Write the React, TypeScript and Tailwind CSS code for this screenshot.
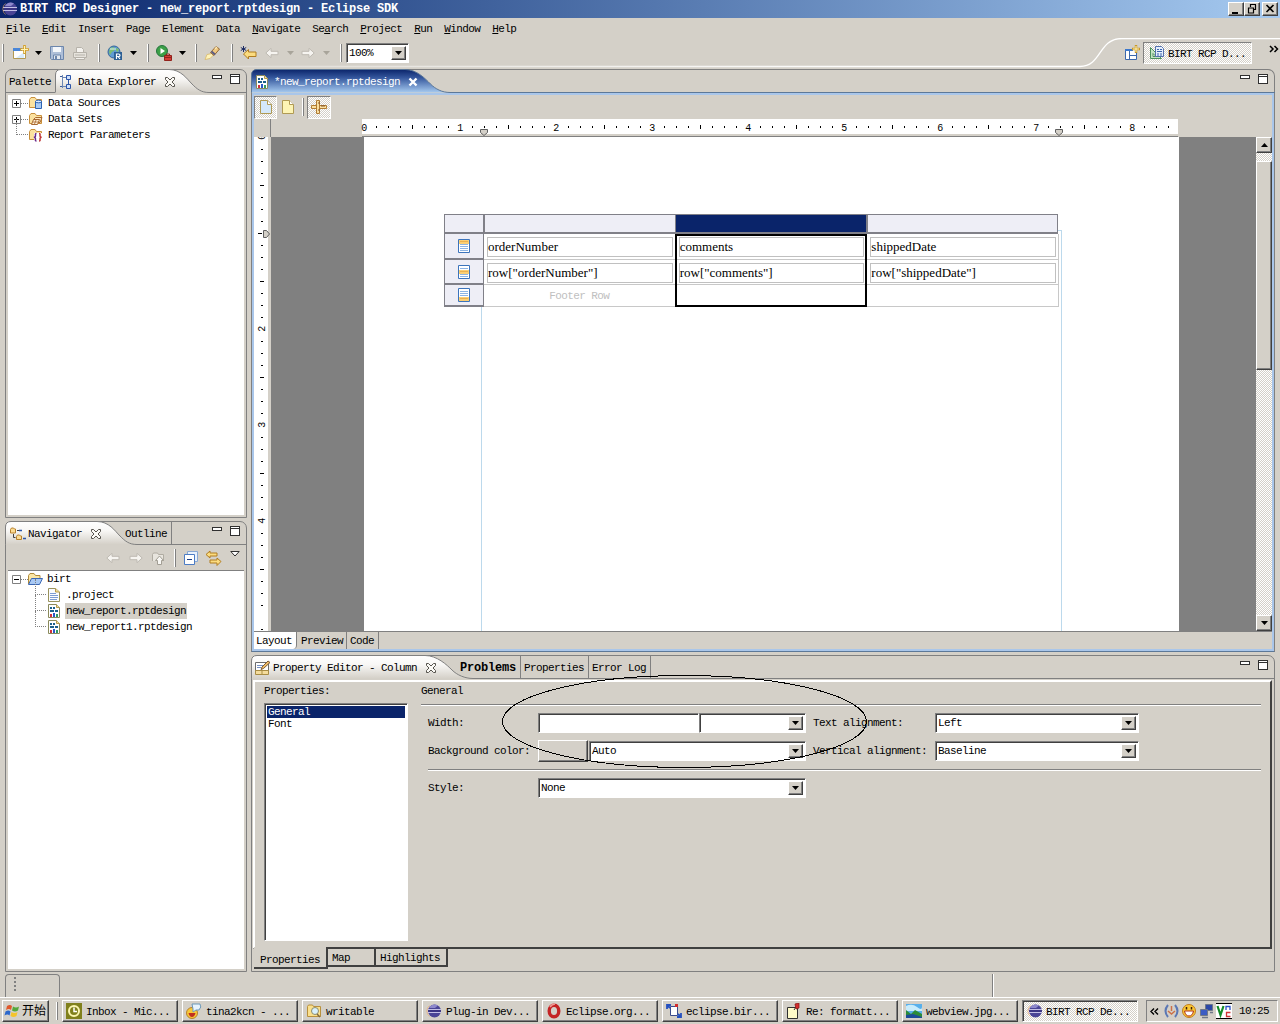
import type { ReactNode } from 'react';

const RAISED =
  'border border-t-white border-l-white border-r-[#404040] border-b-[#404040] bg-[#d4d0c8] shadow-[inset_-1px_-1px_0_#808080]';
const SUNKEN =
  'border border-t-[#808080] border-l-[#808080] border-r-white border-b-white shadow-[inset_1px_1px_0_#404040]';
const CHECKER = 'bg-[repeating-conic-gradient(#ffffff_0_25%,#d4d0c8_0_50%)] bg-[length:2px_2px]';

function Svg({ w = 16, h = 16, className = '', children }: { w?: number; h?: number; className?: string; children: ReactNode }) {
  return (
    <svg width={w} height={h} viewBox={`0 0 ${w} ${h}`} className={`block shrink-0 ${className}`}>
      {children}
    </svg>
  );
}

/* ---------- icons ---------- */

function EclipseIcon() {
  return (
    <Svg>
      <circle cx="8.5" cy="8" r="6.5" fill="#4a4596" />
      <path d="M4 3.500A6.500 6.500 0 0 1 12 2.600L9 5H3z" fill="#8d88cc" />
      <path d="M1 6.500h14M1 9.500h14" stroke="#c4c0e6" />
      <path d="M2 8h13" stroke="#2c2672" />
      <path d="M3.500 2.500A7 7 0 0 0 3.500 13.500" fill="none" stroke="#f0a860" strokeWidth=".6" />
    </Svg>
  );
}

function ReportIcon() {
  return (
    <Svg>
      <path d="M2.500 1.500h8l3 3v10h-11z" fill="#fff" stroke="#8a8a5c" />
      <path d="M10.500 1.500v3h3" fill="#f3e2a0" stroke="#b79a4c" />
      <path d="M4 4h2v2H4zM7 4h2v2H7zM4 7h4v2H4zM9 7h3v2H9z" fill="#1c5f8c" />
      <path d="M4 11h2v3H4z" fill="#d22f3a" />
      <path d="M7 10h2v4H7z" fill="#2b57c8" />
      <path d="M10 11h2v3h-2z" fill="#2f9a66" />
    </Svg>
  );
}

function FileIcon() {
  return (
    <Svg>
      <path d="M2.500 1.500h7l4 3.500v9.500h-11z" fill="#fbfcff" stroke="#9a935c" />
      <path d="M9.500 1.500v3.500h4" fill="#f0dc98" stroke="#b79a4c" />
      <path d="M4 6.500h6M4 8.500h8M4 10.500h8M4 12.500h7" stroke="#7d9cd2" />
    </Svg>
  );
}

function FolderOpenIcon() {
  return (
    <Svg>
      <path d="M1.500 13V4.500l1.500-2h4l1.500 2h4.500V8" fill="#fbe6a4" stroke="#b08a3c" />
      <path d="M1.500 13.500L4.500 7.500h11l-3 6z" fill="#a9c9f4" stroke="#3c68b4" />
    </Svg>
  );
}

function DataFolderIcon({ kind }: { kind: 'source' | 'set' | 'param' }) {
  return (
    <Svg>
      <path d="M1.500 12.500v-8l1.500-2h4l1.500 2h5v8z" fill="#fbe2a0" stroke="#c88f3c" />
      {kind === 'source' && (
        <>
          <path d="M7.500 6.500v7h6v-7z" fill="#a8cbf4" stroke="#2e64b4" />
          <ellipse cx="10.500" cy="6.500" rx="3" ry="1.300" fill="#dcebff" stroke="#2e64b4" />
        </>
      )}
      {kind === 'set' && (
        <>
          <path d="M5.500 8.500l2-2h6.500l-2 5h-2" fill="#ffe6b8" stroke="#a86830" />
          <path d="M3.500 13.500l2-5h6l-2 5z" fill="#fff2d8" stroke="#a86830" />
          <path d="M5 11h5M8 9l-1.500 4" stroke="#a86830" strokeWidth=".8" />
        </>
      )}
      {kind === 'param' && (
        <>
          <path d="M6 6h8v8H6z" fill="#fff" />
          <path d="M8.500 6.500c-1.500 0-1 1.500-1 2.500s-.5 1-1.500 1.300c1 .2 1.500.5 1.500 1.400s-.5 2.300 1 2.300" fill="none" stroke="#6a2c8c" strokeWidth="1.500" />
          <path d="M11 6.500c1.500 0 1 1.500 1 2.500s.5 1 1.500 1.300c-1 .2-1.500.5-1.500 1.400s.5 2.300-1 2.300" fill="none" stroke="#c03838" strokeWidth="1.500" />
        </>
      )}
    </Svg>
  );
}

function ExplorerIcon() {
  return (
    <Svg>
      <path d="M4.500 1v13M4.500 3.500h4M4.500 12.500h4" fill="none" stroke="#6a86b4" />
      <path d="M2 2.500h2M2 12.500h2" stroke="#3c5c9c" />
      <path d="M8.500 1.500h4v4h-4zM8.500 10.500h4v4h-4z" fill="#cfe0fa" stroke="#2c55a8" />
      <path d="M10.500 5.500v5" stroke="#2c55a8" />
    </Svg>
  );
}

function NavigatorIcon() {
  return (
    <Svg>
      <path d="M.5 3.500l1-1.500h2l1 1h1v4h-5zM6.500 10.500l1-1.500h2l1 1h1v3.500h-5z" fill="#fbdc94" stroke="#b8802c" />
      <path d="M3.500 8v3.500h2M7 4.500h2" fill="none" stroke="#404040" />
      <path d="M9 4.500h3M13 12.500h3" stroke="#2c55a8" strokeWidth="1.500" />
    </Svg>
  );
}

function PropertyIcon() {
  return (
    <Svg>
      <path d="M.5 2.500h13v11H.5z" fill="#fff" stroke="#6c6c6c" />
      <path d="M.5 10.500h13v4H.5z" fill="#f4dc9c" stroke="#a88c44" />
      <path d="M7 10.500v4" stroke="#a88c44" />
      <path d="M2 5.500h6M2 7.500h4" stroke="#7690c4" />
      <path d="M6 9.500l1-2.500L13 1l2 1.500-6.500 6z" fill="#eebc68" stroke="#7c5a34" />
    </Svg>
  );
}

function CloseX({ light = false }: { light?: boolean }) {
  if (light) {
    return (
      <Svg w={10} h={10}>
        <path d="M1.500 1.500l7 7M8.500 1.500l-7 7" stroke="#fff" strokeWidth="2.400" />
      </Svg>
    );
  }
  return (
    <Svg w={12} h={12}>
      <path d="M1.500 1.500h2L6 4l2.500-2.500h2v2L8 6l2.500 2.500v2h-2L6 8l-2.500 2.500h-2v-2L4 6 1.500 3.500z" fill="#fbfaf6" stroke="#55524c" />
    </Svg>
  );
}

function MinMax() {
  return (
    <div className="flex items-start gap-[8px]">
      <div className="mt-px h-[4px] w-[10px] border border-[#303030] bg-white" />
      <div className="h-[10px] w-[10px] border border-[#303030] bg-white">
        <div className="mt-px h-px bg-[#303030]" />
      </div>
    </div>
  );
}

function DownArrow({ color = '#000' }: { color?: string }) {
  return (
    <Svg w={7} h={4}>
      <path d="M0 0h7L3.500 4z" fill={color} />
    </Svg>
  );
}

function ArrowIcon({ dir }: { dir: 'left' | 'right' }) {
  return (
    <Svg w={14} h={12} className={dir === 'right' ? '-scale-x-100' : ''}>
      <path d="M.8 6L6 1.300v3h7v3.400H6v3z" fill="#f6f4f0" stroke="#bebab2" />
    </Svg>
  );
}

function NewIcon() {
  return (
    <Svg w={17}>
      <path d="M1.500 4.500h12v9h-12z" fill="#fff" stroke="#b39a54" />
      <path d="M1 3h9v3H1z" fill="#4a86d8" />
      <path d="M4 13l8-6v6z" fill="#d8ecfc" />
      <path d="M12.500 0v9M8 4.500h9" stroke="#d4a02c" strokeWidth="2.600" />
      <path d="M12.500 1v7M9 4.500h7" stroke="#fff4b4" />
    </Svg>
  );
}

function SaveIcon() {
  return (
    <Svg>
      <path d="M1.500 1.500h13v13h-12l-1-1z" fill="#aebfd8" stroke="#6c86ac" />
      <path d="M4 2h8v5H4z" fill="#f4f7fb" />
      <path d="M4.500 14v-4h7v4" fill="#e4e9f0" stroke="#6c86ac" />
      <path d="M6 11h2v3H6z" fill="#6c86ac" />
    </Svg>
  );
}

function PrintIcon() {
  return (
    <Svg>
      <path d="M4.500 8V2.500h5l2 2V8" fill="#f4f2ee" stroke="#b6b2aa" />
      <path d="M1.500 7.500h13v5h-13z" fill="#e6e3dc" stroke="#b6b2aa" />
      <path d="M3.500 12.500h9v2h-9zM3 10h10" fill="#f4f2ee" stroke="#b6b2aa" />
    </Svg>
  );
}

function GlobeIcon() {
  return (
    <Svg>
      <circle cx="7" cy="7" r="6" fill="#5f9cd4" stroke="#35669c" />
      <path d="M3 3l4-1 1 3-3 2-2 3-1-3zM9 3l3 1-1 3-2-1z" fill="#7cbc74" />
      <path d="M3 4h6" stroke="#e0f0fc" />
      <path d="M7 7h8v8H7z" fill="#2c5f94" />
      <path d="M9.500 14v-5h2q1.500 0 1.500 1.300T11.500 11.500h-2M11 11.500l2 2.500" fill="none" stroke="#fff" strokeWidth="1.200" />
    </Svg>
  );
}

function RunIcon() {
  return (
    <Svg w={17}>
      <circle cx="6" cy="6" r="5.500" fill="#3da048" stroke="#24743c" />
      <path d="M4.500 3v6L9 6z" fill="#fff" />
      <path d="M8.500 10.500h7v5h-7z" fill="#d43c34" stroke="#92221c" />
      <path d="M10.500 10.500V9h3v1.500M8.500 12.500h7" fill="none" stroke="#92221c" />
    </Svg>
  );
}

function TorchIcon() {
  return (
    <Svg w={17}>
      <path d="M1 14.500l2-5 5-1 1 2-3 3z" fill="#fff3b8" stroke="#d8b868" strokeWidth=".8" />
      <path d="M6.500 7.500L12 1.500l3.500 2.500-5.500 6.500z" fill="#f0c880" stroke="#946834" />
      <path d="M7.500 6.500l3.500 3" stroke="#5c5c84" strokeWidth="2" />
      <path d="M11 4l2-2" stroke="#fce8b4" strokeWidth="1.500" />
    </Svg>
  );
}

function LastEditIcon() {
  return (
    <Svg w={17}>
      <path d="M3.500 9l5-4.500V7h7.500v4.500H8.500V14z" fill="#fbdc80" stroke="#b07c20" />
      <path d="M3.500 1v6M.8 2.500l5.400 3M6.200 2.500l-5.400 3" stroke="#1c2c64" />
    </Svg>
  );
}

function PerspectiveIcon() {
  return (
    <Svg>
      <path d="M1.500 4.500h11v10h-11z" fill="#fff" stroke="#3c68ac" />
      <path d="M1 4h8v2H1z" fill="#3c78cc" />
      <path d="M5.500 6v8M5.500 10.500h7" stroke="#3c68ac" />
      <path d="M12 0v8M8 4h8" stroke="#c89828" strokeWidth="2.400" />
      <path d="M12 1v6M9 4h6" stroke="#fff4b8" />
    </Svg>
  );
}

function BirtIcon() {
  return (
    <Svg>
      <path d="M1.500 2.500v11h11z" fill="#c4e4c4" stroke="#4c905c" />
      <path d="M4 8.500v3h3z" fill="#fff" stroke="#4c905c" />
      <path d="M6.500 1.500h6l2 2v8h-8z" fill="#e4eefb" stroke="#5470ac" />
      <path d="M8 4.500h2M11 4.500h2M8 6.500h5M9 8v3M12 8v3" stroke="#3c64ac" />
    </Svg>
  );
}

function PageIcon({ tint }: { tint: string }) {
  return (
    <Svg w={14}>
      <path d="M1.500 1.500h7l4 4v9h-11z" fill={tint} stroke="#b09a54" />
      <path d="M8.500 1.500v4h4" fill="#fff" stroke="#b09a54" />
    </Svg>
  );
}

function RulerIcon() {
  return (
    <Svg>
      <path d="M.5 6.500h15v3H.5z" fill="#fbe0a0" stroke="#b07c34" />
      <path d="M5.500 1.500h3v13h-3z" fill="#fbe0a0" stroke="#b07c34" />
      <path d="M11 6v2M13 6v2M7 11h2M7 4h2" stroke="#80542c" />
    </Svg>
  );
}

function UpFolderIcon() {
  return (
    <Svg>
      <path d="M1.500 11V4.500l1-1.500h4l1 1.500h5V11" fill="#e8e5de" stroke="#b0aca2" />
      <path d="M6.500 14.500v-4h-2L8.500 6l4 4.500h-2v4z" fill="#f8f7f4" stroke="#a29e94" />
    </Svg>
  );
}

function CollapseIcon() {
  return (
    <Svg w={14} h={14}>
      <path d="M3.500 3.500V.5h10v10h-3" fill="#e8f1fc" stroke="#88a8d4" />
      <path d="M.5 3.500h10v10H.5z" fill="#fff" stroke="#4c7cc4" />
      <path d="M3 8.500h5" stroke="#1c4088" />
    </Svg>
  );
}

function LinkIcon() {
  return (
    <Svg w={17}>
      <path d="M1 4.500L5 1v2h7v3H5v2z" fill="#fbdc80" stroke="#b07c20" />
      <path d="M16 11.500L12 8v2H5v3h7v2.500z" fill="#fbdc80" stroke="#b07c20" />
    </Svg>
  );
}

function BandIcon({ band }: { band: 'header' | 'detail' | 'footer' }) {
  const y = { header: 1, detail: 5, footer: 9 }[band];
  return (
    <Svg w={12} h={14}>
      <path d="M.5.500h11v13H.5z" fill="#fff" stroke="#3c74bc" />
      <path d="M2 3.500h8M2 5.500h8M2 7.500h8M2 9.500h8M2 11.500h8" stroke="#8cb4e4" />
      <path d={`M1 ${y}h10v4H1z`} fill="#fbcf74" />
      <path d={`M2 ${y + 1.5}h8`} stroke="#eab050" />
    </Svg>
  );
}

/* ---------- shared widgets ---------- */

function Combo({ value = '', className = '' }: { value?: string; className?: string }) {
  return (
    <div className={`flex h-[20px] items-stretch bg-white py-[2px] pr-[2px] ${SUNKEN} ${className}`}>
      <span className="flex-1 pl-[2px] leading-[15px]">{value}</span>
      <span className={`flex w-[15px] items-center justify-center ${RAISED}`}>
        <DownArrow />
      </span>
    </div>
  );
}

function Handle({ className = '' }: { className?: string }) {
  return <div className={`h-[18px] w-[2px] border-l border-white bg-[#808080] ${className}`} />;
}

function Etched({ className = '' }: { className?: string }) {
  return <div className={`h-[2px] border-t border-[#808080] bg-white ${className}`} />;
}

/* Curved tab outline; x0 is the left edge, x1 where the slope starts, x2 where it lands. */
function TabShape({ id, width, x0, x1, x2, blue = false }: { id: string; width: number; x0: number; x1: number; x2: number; blue?: boolean }) {
  const m = (x1 + x2) / 2;
  const line = blue ? '#5c7898' : '#808080';
  const left = `M${x0 + 0.5} 23.500V6Q${x0 + 0.5} .5 ${x0 + 6} .5`;
  const curve = `H${x1}C${x1 + 12} .5 ${m - 2} 10 ${m + 3} 15S${x2 - 8} 23.500 ${x2} 23.500`;
  return (
    <svg width={width} height="24" className="absolute -top-px -left-px">
      <defs>
        <linearGradient id={id} x1="0" y1="0" x2="0" y2="1">
          <stop offset="0" stopColor={blue ? '#0a246a' : '#ffffff'} />
          <stop offset={blue ? '.35' : '.4'} stopColor={blue ? '#34569c' : '#f8f7f5'} />
          <stop offset="1" stopColor={blue ? '#a6caf0' : '#d4d0c8'} />
        </linearGradient>
      </defs>
      <path d={`${left}${curve}z`} fill={`url(#${id})`} />
      <path d={`${left}${curve}H${width}`} fill="none" stroke={line} />
      {x0 > 0 && <path d={`M0 23.500H${x0}`} stroke={line} />}
    </svg>
  );
}

/* ---------- window chrome ---------- */

function TitleBar() {
  return (
    <header className="flex h-[18px] shrink-0 items-center bg-linear-to-r from-[#0a246a] to-[#a6caf0] pr-[2px] pl-[2px]">
      <EclipseIcon />
      <span className="ml-[2px] flex-1 text-[12px] leading-[18px] font-bold tracking-[-0.2px] whitespace-pre text-white">
        BIRT RCP Designer - new_report.rptdesign - Eclipse SDK
      </span>
      <div className={`h-[14px] w-[16px] ${RAISED}`}>
        <Svg w={14} h={12}>
          <path d="M3 9h6v2H3z" />
        </Svg>
      </div>
      <div className={`h-[14px] w-[16px] ${RAISED}`}>
        <Svg w={14} h={12}>
          <path d="M5 1.500h6M5.500 1v3M10.500 2v4.500H9M3 5h6M3.500 4.500v5.500h5V5" fill="none" stroke="#000" strokeWidth="1.200" />
        </Svg>
      </div>
      <div className={`ml-[2px] h-[14px] w-[16px] ${RAISED}`}>
        <Svg w={14} h={12}>
          <path d="M3.500 2l7 7M10.500 2l-7 7" stroke="#000" strokeWidth="1.600" />
        </Svg>
      </div>
    </header>
  );
}

const MENUS: [string, number][] = [
  ['File', 0],
  ['Edit', 0],
  ['Insert', -1],
  ['Page', -1],
  ['Element', -1],
  ['Data', -1],
  ['Navigate', 0],
  ['Search', 2],
  ['Project', 0],
  ['Run', 0],
  ['Window', 0],
  ['Help', 0],
];

function MenuBar() {
  return (
    <nav className="flex h-[20px] shrink-0 items-center gap-3 pt-px pl-[6px]">
      {MENUS.map(([label, key]) => (
        <span key={label} className="leading-[18px]">
          {key < 0 ? (
            label
          ) : (
            <>
              {label.slice(0, key)}
              <u className="underline-offset-1">{label[key]}</u>
              {label.slice(key + 1)}
            </>
          )}
        </span>
      ))}
    </nav>
  );
}

function Toolbar() {
  return (
    <div className="relative flex h-[30px] shrink-0 items-center">
      <svg width="1280" height="30" className="absolute top-0 left-0">
        <defs>
          <linearGradient id="swoosh" gradientUnits="userSpaceOnUse" x1="0" y1="0" x2="900" y2="0">
            <stop offset="0" stopColor="#d4d0c8" />
            <stop offset="1" stopColor="#fff" />
          </linearGradient>
        </defs>
        <path d="M0 28.500h1080c22 0 18-28 42-28h158" fill="none" stroke="url(#swoosh)" strokeWidth="1.300" />
      </svg>
      <div className="relative flex h-full flex-1 items-center">
        <Handle className="ml-[2px]" />
        <span className="ml-[8px]"><NewIcon /></span>
        <span className="ml-[6px]"><DownArrow /></span>
        <span className="ml-[7px]"><SaveIcon /></span>
        <span className="ml-[7px]"><PrintIcon /></span>
        <Handle className="ml-[10px]" />
        <span className="ml-[7px]"><GlobeIcon /></span>
        <span className="ml-[7px]"><DownArrow /></span>
        <Handle className="ml-[10px]" />
        <span className="ml-[7px]"><RunIcon /></span>
        <span className="ml-[6px]"><DownArrow /></span>
        <Handle className="ml-[9px]" />
        <span className="ml-[7px]"><TorchIcon /></span>
        <Handle className="ml-[10px]" />
        <span className="ml-[7px]"><LastEditIcon /></span>
        <span className="ml-[8px]"><ArrowIcon dir="left" /></span>
        <span className="ml-[8px]"><DownArrow color="#a8a49a" /></span>
        <span className="ml-[7px]"><ArrowIcon dir="right" /></span>
        <span className="ml-[8px]"><DownArrow color="#a8a49a" /></span>
        <Handle className="ml-[10px]" />
        <Combo value="100%" className="ml-[4px] w-[63px]" />
      </div>
      <div className="relative flex h-full items-center">
        <PerspectiveIcon />
        <div className={`ml-[3px] flex h-[22px] w-[109px] items-center border border-t-[#808080] border-l-[#808080] border-r-white border-b-white pl-[5px] ${CHECKER}`}>
          <BirtIcon />
          <span className="mt-px ml-[3px]">BIRT RCP D...</span>
        </div>
        <Svg w={10} h={8} className="mr-px mb-2 ml-[17px]">
          <path d="M1 1l3 3-3 3M5.500 1l3 3-3 3" fill="none" stroke="#000" strokeWidth="1.500" />
        </Svg>
      </div>
    </div>
  );
}

/* ---------- left column ---------- */

function Toggle({ open = false }: { open?: boolean }) {
  return (
    <Svg w={9} h={9}>
      <path d="M.5.500h8v8h-8z" fill="#fff" stroke="#808080" />
      <path d={open ? 'M2 4.500h5' : 'M2 4.500h5M4.500 2v5'} stroke="#000" />
    </Svg>
  );
}

function DataExplorer() {
  return (
    <section className="flex h-[449px] flex-col rounded-t-[7px] border border-[#808080] px-[2px] pb-[2px]">
      <div className="relative -mx-[2px] h-[25px] shrink-0">
        <TabShape id="tab-data" width={242} x0={50} x1={164} x2={204} />
        <div className="relative flex h-[23px] items-center pl-[3px]">
          <span>Palette</span>
          <span className="ml-[7px]"><ExplorerIcon /></span>
          <span className="ml-[4px]">Data Explorer</span>
          <span className="ml-[8px]"><CloseX /></span>
          <div className="mt-[-5px] ml-auto pr-[6px]"><MinMax /></div>
        </div>
      </div>
      <div className="flex-1 bg-white">
        <ul className="pl-[4px]">
          {(['source', 'set', 'param'] as const).map((kind) => (
            <li key={kind} className="flex h-[16px] items-center">
              {kind === 'param' ? (
                <span className="-mt-4 ml-[4px] h-4 w-[12px] border-b border-l border-dotted border-[#808080]" />
              ) : (
                <>
                  <Toggle />
                  <span className="w-[7px] border-t border-dotted border-[#808080]" />
                </>
              )}
              <DataFolderIcon kind={kind} />
              <span className="ml-[4px]">{{ source: 'Data Sources', set: 'Data Sets', param: 'Report Parameters' }[kind]}</span>
            </li>
          ))}
        </ul>
      </div>
    </section>
  );
}

function Navigator() {
  const files = [
    { name: '.project', icon: <FileIcon /> },
    { name: 'new_report.rptdesign', icon: <ReportIcon />, selected: true },
    { name: 'new_report1.rptdesign', icon: <ReportIcon /> },
  ];
  return (
    <section className="flex flex-1 flex-col rounded-t-[7px] border border-[#808080] px-[2px] pb-[2px]">
      <div className="relative -mx-[2px] h-[24px] shrink-0">
        <TabShape id="tab-nav" width={242} x0={0} x1={92} x2={132} />
        <div className="relative flex h-[23px] items-center pl-[4px]">
          <NavigatorIcon />
          <span className="ml-[2px]">Navigator</span>
          <span className="ml-[8px]"><CloseX /></span>
          <span className="ml-[23px] flex h-[23px] items-center border-r border-[#808080] pr-[4px]">Outline</span>
          <div className="mt-[-5px] ml-auto pr-[6px]"><MinMax /></div>
        </div>
      </div>
      <div className="flex h-[25px] shrink-0 items-center border-b border-[#808080] pl-[98px]">
        <ArrowIcon dir="left" />
        <span className="ml-[9px]"><ArrowIcon dir="right" /></span>
        <span className="ml-[8px]"><UpFolderIcon /></span>
        <Handle className="ml-[7px]" />
        <span className="ml-[8px]"><CollapseIcon /></span>
        <span className="ml-[7px]"><LinkIcon /></span>
        <Svg w={10} h={6} className="mb-2 ml-[8px]">
          <path d="M.8.500h8.400L5 5z" fill="#fff" stroke="#303030" />
        </Svg>
      </div>
      <div className="flex-1 bg-white pl-[4px]">
        <div className="flex h-[16px] items-center">
          <Toggle open />
          <span className="w-[7px] border-t border-dotted border-[#808080]" />
          <span className="-ml-px"><FolderOpenIcon /></span>
          <span className="ml-[4px]">birt</span>
        </div>
        {files.map((f) => (
          <div key={f.name} className="flex h-[16px] items-center">
            <span className="-mt-4 ml-[23px] h-4 w-[11px] border-b border-l border-dotted border-[#808080]" />
            {f.icon}
            <span className={`ml-[3px] pr-px pl-[1px] leading-[16px] ${f.selected ? 'bg-[#d4d0c8]' : ''}`}>{f.name}</span>
          </div>
        ))}
      </div>
    </section>
  );
}

/* ---------- report editor ---------- */

const INCH = 96;
const STEP = 12;

function HorizontalRuler() {
  const ticks = Array.from({ length: 68 }, (_, i) => i).filter((i) => i % 8 !== 0);
  return (
    <svg width="816" height="18" className="ml-[108px] block overflow-visible" shapeRendering="crispEdges">
      <rect width="816" height="15" fill="#fff" />
      <path d="M0 17.500h816" stroke="#808080" />
      {ticks.map((i) => (
        <rect key={i} x={2 + i * STEP} y={i % 4 === 0 ? 6 : 7} width="1" height={i % 4 === 0 ? 4 : 2} />
      ))}
      {Array.from({ length: 9 }, (_, n) => (
        <text key={n} x={2 + n * INCH} y="12" textAnchor="middle" fontSize="10">
          {n}
        </text>
      ))}
      {[122, 697].map((x) => (
        <path key={x} d={`M${x - 3.500} 10.500h7v3l-3.500 3-3.500-3z`} fill="#d4d0c8" stroke="#606060" shapeRendering="auto" />
      ))}
    </svg>
  );
}

function VerticalRuler() {
  const ticks = Array.from({ length: 42 }, (_, i) => i).filter((i) => i % 8 !== 0);
  return (
    <svg width="17" height="494" className="block shrink-0" shapeRendering="crispEdges">
      <rect width="14" height="494" fill="#fff" />
      {ticks.map((i) => (
        <rect key={i} x={i % 4 === 0 ? 6 : 7} y={i * STEP} width={i % 4 === 0 ? 4 : 2} height="1" />
      ))}
      {[0, 2, 3, 4].map((n) => (
        <text key={n} transform={`translate(11 ${n * INCH}) rotate(-90)`} textAnchor="middle" fontSize="10">
          {n}
        </text>
      ))}
      <path d="M4 96.500h4" stroke="#000" />
      <path d="M9.500 93.500h3l3 3.500-3 3.500h-3z" fill="#d4d0c8" stroke="#606060" shapeRendering="auto" />
    </svg>
  );
}

function DataCell({ text }: { text: string }) {
  return (
    <div className="flex-1 border-r border-b border-[#c8c8c8] pt-[3px] pr-[2px] pb-[2px] pl-[3px]">
      <div className="h-[20px] border border-[#c0c0c0] font-['Liberation_Serif',serif] text-[13px] leading-[17px] tracking-normal">{text}</div>
    </div>
  );
}

function RowHead({ band }: { band: 'header' | 'detail' | 'footer' }) {
  return (
    <div className="flex w-[40px] items-center justify-center border-x border-b-2 border-[#808088] bg-[#eeeef6]">
      <BandIcon band={band} />
    </div>
  );
}

function ReportTable() {
  return (
    <div className="relative ml-[80px] w-[615px]">
      <div className="mr-px flex h-[20px] border border-b-2 border-[#808088] bg-[#eeeef6]">
        <div className="w-[40px] border-r-2 border-[#808088]" />
        <div className="w-[191px] border-r border-[#808088]" />
        <div className="w-[192px] border-r-2 border-[#808088] bg-[#0a246a]" />
      </div>
      <div className="flex h-[26px]">
        <RowHead band="header" />
        {['orderNumber', 'comments', 'shippedDate'].map((t) => (
          <DataCell key={t} text={t} />
        ))}
      </div>
      <div className="flex h-[25px]">
        <RowHead band="detail" />
        {['row["orderNumber"]', 'row["comments"]', 'row["shippedDate"]'].map((t) => (
          <DataCell key={t} text={t} />
        ))}
      </div>
      <div className="flex h-[22px]">
        <RowHead band="footer" />
        <div className="flex-1 border-r border-b border-[#c8c8c8] text-center leading-[22px] text-[#c0c0c0]">Footer Row</div>
        <div className="flex-1 border-r border-b border-[#c8c8c8]" />
        <div className="flex-1 border-r border-b border-[#c8c8c8]" />
      </div>
      {/* selected column outline */}
      <div className="absolute top-[20px] left-[231px] h-[73px] w-[192px] border-2 border-black" />
    </div>
  );
}

function ScrollBar() {
  return (
    <div className={`flex w-[16px] shrink-0 flex-col ${CHECKER}`}>
      <div className={`flex h-[16px] items-center justify-center ${RAISED}`}>
        <Svg w={7} h={4} className="rotate-180">
          <path d="M0 0h7L3.500 4z" />
        </Svg>
      </div>
      <div className={`mt-[8px] h-[209px] ${RAISED}`} />
      <div className={`mt-auto flex h-[16px] items-center justify-center ${RAISED}`}>
        <DownArrow />
      </div>
    </div>
  );
}

function ReportEditor() {
  return (
    <section className="flex h-[583px] flex-col rounded-t-[7px] border border-[#808080] border-b-[#5c7898]">
      <div className="relative h-[23px] shrink-0">
        <TabShape id="tab-editor" width={1024} x0={0} x1={154} x2={199} blue />
        <div className="relative flex h-[23px] items-center pl-[2px] text-white">
          <ReportIcon />
          <span className="ml-[4px]">*new_report.rptdesign</span>
          <span className="ml-[8px]"><CloseX light /></span>
          <div className="mt-[-5px] ml-auto pr-[6px]"><MinMax /></div>
        </div>
      </div>
      <div className="flex flex-1 flex-col border-2 border-[#a9c6ea]">
        <div className="flex h-[24px] shrink-0 items-center">
          <div className={`flex h-[23px] w-[23px] items-center justify-center border border-t-[#808080] border-l-[#808080] border-r-white border-b-white ${CHECKER}`}>
            <PageIcon tint="#d4e8fa" />
          </div>
          <span className="ml-[4px]"><PageIcon tint="#fdf4b4" /></span>
          <Handle className="ml-[7px]" />
          <div className={`ml-[3px] flex h-[23px] w-[24px] items-center justify-center border border-t-[#808080] border-l-[#808080] border-r-white border-b-white ${CHECKER}`}>
            <RulerIcon />
          </div>
        </div>
        <div className="flex h-[18px] shrink-0">
          <div className="-mr-[17px] w-[17px] border-r border-[#808080]" />
          <HorizontalRuler />
        </div>
        <div className="flex h-[494px] shrink-0">
          <VerticalRuler />
          <div className="flex flex-1 bg-[#808080] pl-[93px]">
            <div className="relative w-[815px] bg-white pt-[77px]">
              <div className="absolute top-[93px] left-[117px] h-[401px] w-[581px] border border-b-0 border-[#bcd9ec]" />
              <ReportTable />
            </div>
          </div>
          <ScrollBar />
        </div>
        <div className="flex flex-1 border-t border-[#808080]">
          <span className="h-[17px] w-[43px] rounded-br-[4px] border-r border-[#808080] bg-white pl-[2px] leading-[19px]">Layout</span>
          <span className="h-[17px] w-[50px] border-r border-[#808080] pl-[4px] leading-[19px]">Preview</span>
          <span className="h-[17px] w-[32px] border-r border-[#808080] pl-[3px] leading-[19px]">Code</span>
        </div>
      </div>
    </section>
  );
}

/* ---------- property editor ---------- */

function PropertyForm() {
  return (
    <div className="flex-1 pr-[9px] pl-[12px]">
      <div className="h-[22px] leading-[18px]">General</div>
      <Etched />
      <div className="mt-[7px] flex h-[20px] items-center pl-[7px]">
        <span className="w-[110px]">Width:</span>
        <div className={`h-[20px] w-[161px] bg-white ${SUNKEN}`} />
        <Combo className="w-[107px]" />
        <span className="w-[129px] pl-[7px]">Text alignment:</span>
        <Combo value="Left" className="w-[204px]" />
      </div>
      <div className="mt-[7px] flex h-[21px] items-center pl-[7px]">
        <span className="w-[110px] whitespace-nowrap">Background color:</span>
        <div className={`h-[22px] w-[50px] ${RAISED}`} />
        <Combo value="Auto" className="ml-px w-[217px]" />
        <span className="w-[129px] pl-[7px]">Vertical alignment:</span>
        <Combo value="Baseline" className="w-[204px]" />
      </div>
      <Etched className="mt-[8px] ml-[7px]" />
      <div className="mt-[7px] flex h-[20px] items-center pl-[7px]">
        <span className="w-[110px]">Style:</span>
        <Combo value="None" className="w-[268px]" />
      </div>
    </div>
  );
}

function PropertyEditor() {
  return (
    <section className="relative flex flex-1 flex-col rounded-t-[7px] border border-[#808080]">
      <div className="relative h-[24px] shrink-0">
        <TabShape id="tab-prop" width={1024} x0={0} x1={174} x2={222} />
        <div className="relative flex h-[23px] items-center pl-[3px]">
          <PropertyIcon />
          <span className="ml-[2px]">Property Editor - Column</span>
          <span className="ml-[8px]"><CloseX /></span>
          <span className="ml-[23px] flex h-[23px] items-center border-r border-[#808080] pr-[4px] text-[12px] font-bold tracking-[-0.2px]">Problems</span>
          <span className="flex h-[23px] items-center border-r border-[#808080] pr-[4px] pl-[3px]">Properties</span>
          <span className="flex h-[23px] items-center border-r border-[#808080] pr-[4px] pl-[3px]">Error Log</span>
          <div className="mt-[-5px] ml-auto pr-[6px]"><MinMax /></div>
        </div>
      </div>
      <div className="mr-[2px] ml-px flex h-[269px] shrink-0 border-2 border-t-white border-l-white border-r-[#404040] border-b-[#404040] pl-[9px]">
        <div className="w-[145px]">
          <div className="h-[21px] leading-[18px]">Properties:</div>
          <div className={`h-[238px] w-[144px] bg-white p-[2px] leading-[12px] ${SUNKEN}`}>
            <div className="bg-[#0a246a] pl-px text-white">General</div>
            <div className="pl-px">Font</div>
          </div>
        </div>
        <PropertyForm />
      </div>
      <div className="flex items-start pl-[2px]">
        <span className="-mt-[2px] h-[22px] w-[74px] border-r-2 border-b-2 border-[#404040] bg-[#d4d0c8] pl-[6px] leading-[27px]">Properties</span>
        <span className="h-[18px] w-[48px] border-r-2 border-b-2 border-[#404040] pl-[4px] leading-[19px]">Map</span>
        <span className="h-[18px] w-[72px] border-r-2 border-b-2 border-[#404040] pl-[4px] leading-[19px]">Highlights</span>
      </div>
      {/* hand-drawn ring around the width and colour fields */}
      <svg width="368" height="96" className="absolute top-[17px] left-[249px]" shapeRendering="crispEdges">
        <ellipse cx="183.500" cy="48.500" rx="182" ry="46" fill="none" stroke="#000" />
      </svg>
    </section>
  );
}

/* ---------- taskbar ---------- */

function TaskIcon({ name }: { name: string }) {
  switch (name) {
    case 'outlook':
      return (
        <Svg>
          <path d="M0 0h16v16H0z" fill="#80801c" />
          <circle cx="8" cy="8" r="5" fill="#80801c" stroke="#fbf6b0" strokeWidth="2" />
          <path d="M8 4.500V8.500h3" fill="none" stroke="#fff" strokeWidth="1.500" />
        </Svg>
      );
    case 'chat':
      return (
        <Svg>
          <circle cx="6" cy="10" r="5.500" fill="#f8c838" stroke="#b8802c" />
          <path d="M2.500 10h7q-1 4-3.500 4t-3.500-4z" fill="#c03020" />
          <path d="M6 1h8q2 3-1 6h-3l-3 2V6z" fill="#e8f4fc" stroke="#6c98b8" />
        </Svg>
      );
    case 'folder':
      return (
        <Svg>
          <path d="M1.500 13.500v-10l1-1.500h4l1 1.500h7v10z" fill="#fbe08c" stroke="#b8903c" />
          <circle cx="9" cy="8" r="3.500" fill="#d8f0fc" stroke="#8c8c6c" />
          <path d="M11 11l3 3" stroke="#80683c" strokeWidth="1.500" />
        </Svg>
      );
    case 'opera':
      return (
        <Svg>
          <ellipse cx="8" cy="8" rx="4.800" ry="5.800" fill="none" stroke="#c42424" strokeWidth="3.400" />
          <path d="M4 4q2-3 5-3" fill="none" stroke="#f09a94" strokeWidth="1.500" />
        </Svg>
      );
    case 'sync':
      return (
        <Svg>
          <path d="M4.500 3.500h7v9h-7z" fill="#fff" stroke="#3c4c8c" />
          <path d="M1 6V2h4M1 2l3 3M15 10v4h-4M15 14l-3-3" fill="none" stroke="#2450c0" strokeWidth="1.800" />
          <path d="M9 1h3v3H9z" fill="#d42c2c" />
        </Svg>
      );
    case 'note':
      return (
        <Svg>
          <path d="M1.500 4.500h10v11h-10z" fill="#fffbc8" stroke="#303030" />
          <path d="M8 7l2-3" stroke="#303030" />
          <path d="M9 1l4-1v5l-3 1z" fill="#d42c2c" stroke="#8c1818" strokeWidth=".8" />
        </Svg>
      );
    case 'picture':
      return (
        <Svg>
          <path d="M0 1h16v14H0z" fill="#58b0ec" />
          <path d="M0 3q6-3 11 1t5 0v4H0z" fill="#c8ecfc" />
          <path d="M0 7l5 4 4-4 7 4v4H0z" fill="#2c8c38" />
          <path d="M0 12l7-1 9 3v1H0z" fill="#1c4c98" />
        </Svg>
      );
    default:
      return <EclipseIcon />;
  }
}

const TASKS = [
  { icon: 'outlook', label: 'Inbox - Mic...' },
  { icon: 'chat', label: 'tina2kcn - ...' },
  { icon: 'folder', label: 'writable' },
  { icon: 'eclipse', label: 'Plug-in Dev...' },
  { icon: 'opera', label: 'Eclipse.org...' },
  { icon: 'sync', label: 'eclipse.bir...' },
  { icon: 'note', label: 'Re: formatt...' },
  { icon: 'picture', label: 'webview.jpg...' },
];

function Taskbar() {
  return (
    <footer className="flex h-[27px] shrink-0 items-start border-t border-white pt-[2px] pl-[2px]">
      <div className={`flex h-[22px] w-[47px] items-center ${RAISED}`}>
        <Svg w={17} className="ml-px">
          <path d="M3 3q3-2 5 0L7 7Q5 5 2 7z" fill="#e0582c" />
          <path d="M9 3.500q3 2 6 0l-1 4q-3 2-6 0z" fill="#54a83c" />
          <path d="M1.500 8.500q3-2 5 0l-1 4q-2-2-5 0z" fill="#2c68cc" />
          <path d="M7.500 9q3 2 6 0l-1 4q-3 2-6 0z" fill="#f4c42c" />
        </Svg>
        <span className="-mt-[2px] ml-px font-['Noto_Sans_CJK_SC',sans-serif] text-[12px] leading-[18px] tracking-normal">开始</span>
      </div>
      <Handle className="mt-[2px] ml-[7px]" />
      <div className="ml-[4px] flex gap-[4px]">
        {TASKS.map((t) => (
          <div key={t.label} className={`flex h-[22px] w-[116px] items-center pl-[3px] ${RAISED}`}>
            <TaskIcon name={t.icon} />
            <span className="mt-px ml-[4px]">{t.label}</span>
          </div>
        ))}
        <div className={`flex h-[22px] w-[116px] items-center pl-[4px] ${SUNKEN} ${CHECKER}`}>
          <EclipseIcon />
          <span className="mt-[2px] ml-[3px]">BIRT RCP De...</span>
        </div>
      </div>
      <div className="ml-[8px] flex h-[22px] w-[132px] items-center border border-t-[#808080] border-l-[#808080] border-r-white border-b-white pl-[3px]">
        <Svg w={9} h={7}>
          <path d="M4 .5l-3 3 3 3M8 .5l-3 3 3 3" fill="none" stroke="#000" strokeWidth="1.400" />
        </Svg>
        <Svg w={17} className="ml-[4px]">
          <path d="M5 2Q0 8 5 14M12 2q5 6 0 12" fill="none" stroke="#5c78b4" strokeWidth="2" />
          <path d="M8.500 3v5M5 8l3.500 3L12 8" fill="none" stroke="#cc7048" strokeWidth="1.500" />
        </Svg>
        <Svg className="ml-px">
          <circle cx="8" cy="8" r="6.500" fill="#fbc834" stroke="#c07c1c" />
          <path d="M3.500 8h9q-1 5-4.500 5T3.500 8z" fill="#fff" stroke="#b03018" />
          <path d="M5.500 4v2.500M10.500 4v2.500" stroke="#402008" strokeWidth="1.500" />
        </Svg>
        <Svg className="ml-[2px]">
          <path d="M6.500 1.500h7v6h-7z" fill="#2c48a8" stroke="#707888" />
          <path d="M1.500 6.500h7v6h-7z" fill="#3c5cc4" stroke="#707888" />
          <path d="M3 14.500h6M11 9.500h3" stroke="#707888" strokeWidth="1.500" />
        </Svg>
        <Svg className="ml-px">
          <path d="M0 0h16v16H0z" fill="#fff" />
          <path d="M0 .5h16M0 15.500h16" stroke="#000" />
          <path d="M1.500 3l3 9 3-9" fill="none" stroke="#148c28" strokeWidth="2.200" />
          <path d="M10 7V3.500h4V7" fill="none" stroke="#2c50c8" strokeWidth="1.300" />
          <path d="M14.500 9.500H10.500v4h4" fill="none" stroke="#d03434" strokeWidth="1.300" />
        </Svg>
        <span className="ml-[7px]">10:25</span>
      </div>
    </footer>
  );
}

export default function App() {
  return (
    <div className="flex h-[1024px] w-[1280px] flex-col overflow-hidden bg-[#d4d0c8] font-['Liberation_Mono',monospace] text-[11px] leading-[14px] tracking-[-0.6px] whitespace-pre text-black">
      <TitleBar />
      <MenuBar />
      <Toolbar />
      <main className="flex h-[904px] shrink-0 gap-[4px] pt-px pr-[5px] pl-[5px]">
        <div className="flex w-[242px] flex-col gap-[3px]">
          <DataExplorer />
          <Navigator />
        </div>
        <div className="flex flex-1 flex-col gap-[3px]">
          <ReportEditor />
          <PropertyEditor />
        </div>
      </main>
      <div className="flex h-[25px] shrink-0 items-end pl-[5px]">
        <div className="h-[23px] w-[55px] rounded-t-[4px] border border-b-0 border-[#808080] pt-[2px] pl-[8px]">
          <div className="h-[14px] border-l-2 border-dotted border-[#808080]" />
        </div>
        <div className="ml-[932px] h-[23px] w-[2px] border-l border-[#808080] bg-white" />
      </div>
      <Taskbar />
    </div>
  );
}
